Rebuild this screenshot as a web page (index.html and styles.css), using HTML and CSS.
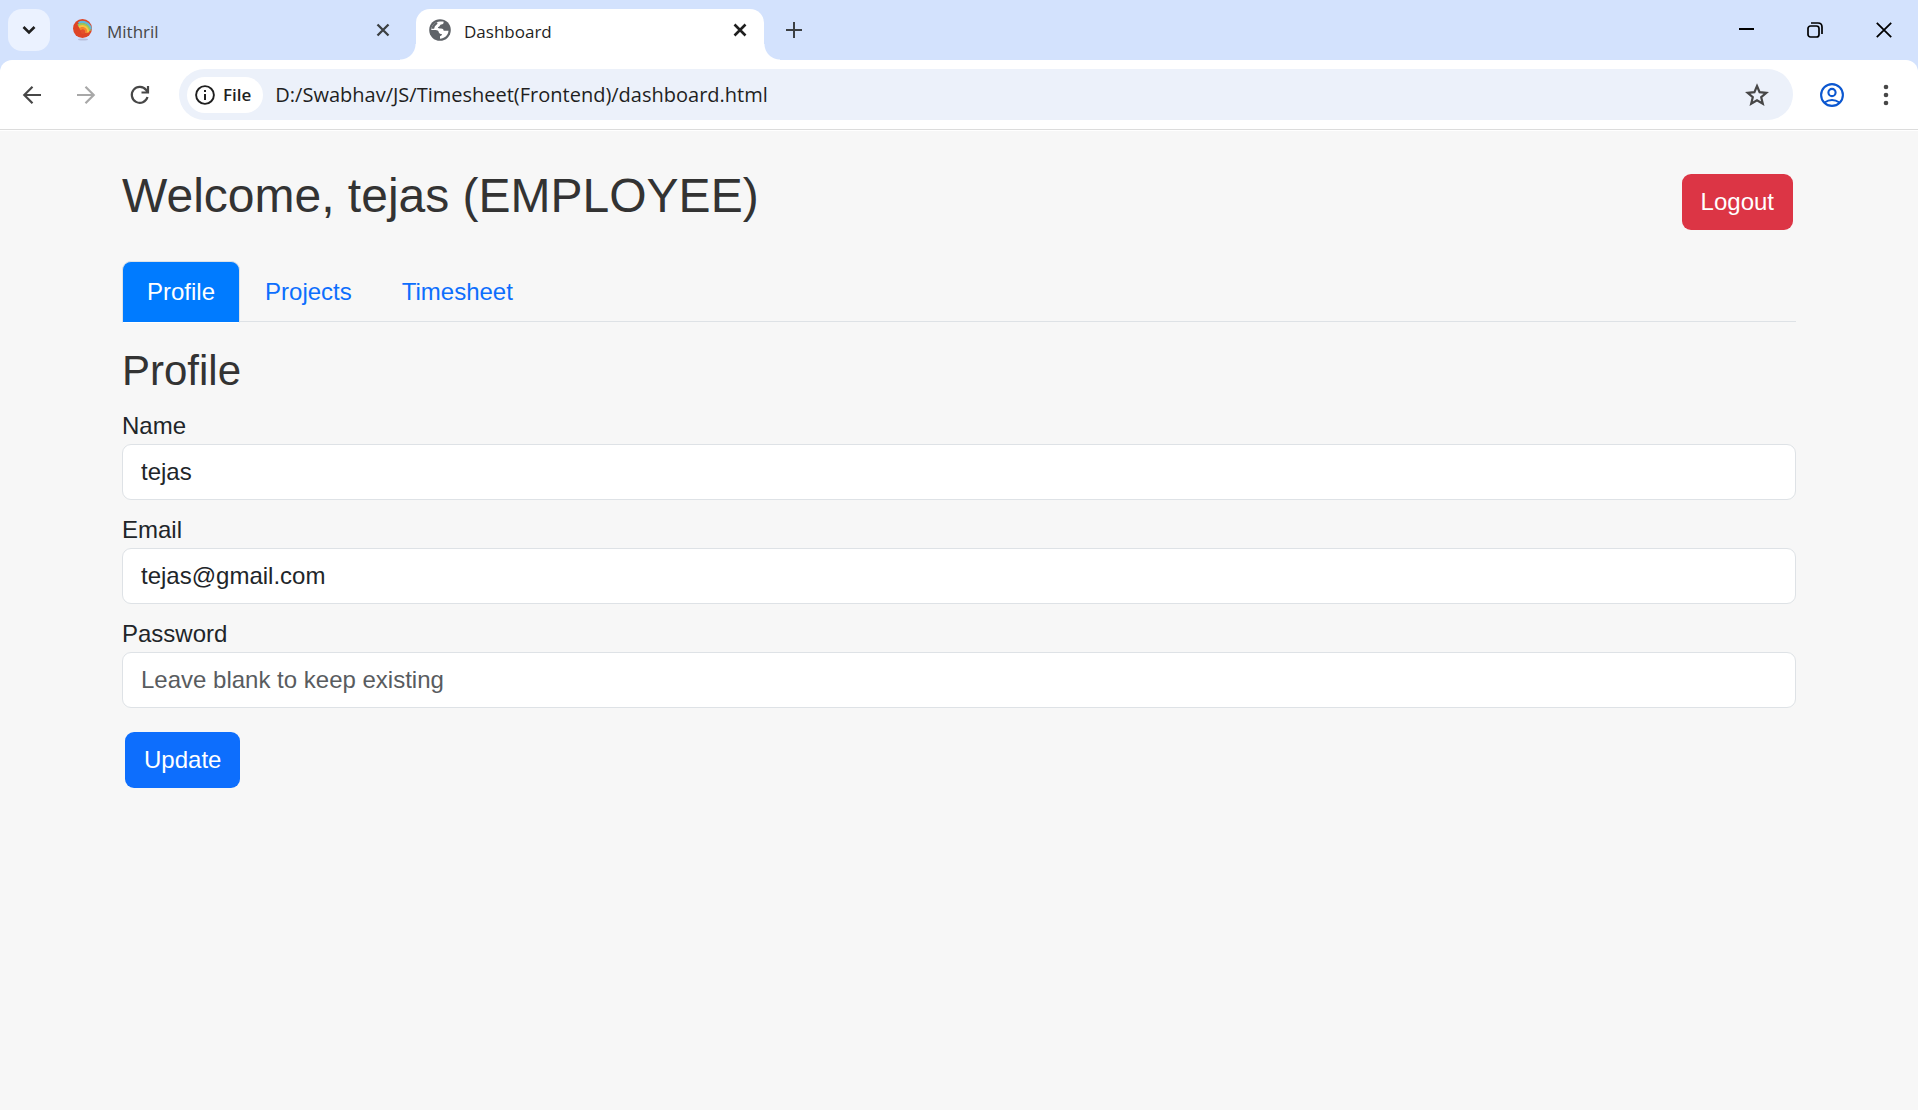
FILE: index.html
```html
<!DOCTYPE html>
<html lang="en">
<head>
<meta charset="utf-8">
<meta name="viewport" content="width=device-width, initial-scale=1">
<title>Dashboard</title>
<link rel="stylesheet" href="styles.css">
</head>
<body>
<header class="browser">
  <div class="tab-strip">
    <button class="tab-search" type="button" aria-label="Search tabs">
      <svg width="14" height="10" viewBox="0 0 14 10" fill="none" stroke="#1f1f1f" stroke-width="2.6"><path d="M1.5 2 7 7.500 12.500 2"/></svg>
    </button>
    <div class="tab">
      <svg class="favicon" width="22" height="22" viewBox="0 0 22 22">
        <ellipse cx="11" cy="20.500" rx="5" ry="1" fill="#b9bfdc"/>
        <circle cx="10.500" cy="9.500" r="9.500" fill="#de4526"/>
        <g fill="none" stroke-width="2.400">
          <path d="M6.500 4.200C11 1.500 18 4 18.700 10.500" stroke="#62b7d9"/>
          <path d="M6 6.500c4.500-3 10.500-.5 11.700 5.500" stroke="#9cc95a"/>
          <path d="M7 8.200c4-2.500 8.500-.5 9.200 5.300" stroke="#f9c440"/>
          <path d="M8 10.500c3-2.500 6.500-.5 6 3.500" stroke="#f3862f"/>
        </g>
        <circle cx="11" cy="12.800" r="2.200" fill="#e4502a"/>
      </svg>
      <span class="tab-title">Mithril</span>
      <button class="tab-close" type="button" aria-label="Close Mithril">
        <svg width="14" height="14" viewBox="0 0 14 14" fill="none" stroke="#3c4043" stroke-width="2.300"><path d="m1.500 1.500 11 11m0-11-11 11"/></svg>
      </button>
    </div>
    <div class="tab tab-active">
      <svg class="favicon" width="22" height="22" viewBox="0 0 22 22">
        <circle cx="11" cy="11" r="10.800" fill="#5f6368"/>
        <path d="M11 2.400h3.500c.5 1.800-.6 3-2.300 3.100-1.200.1-1.200 1.800-2.300 2.200-.8.300-1.200.8-.8 1.400.5.500 1.400.4 2.900.4 1.800 0 2.500.9 2.700 2.300h4.800c-.4 4.500-4 7.900-8.500 7.900v-2.500c1.300-.3 1.900-.9 1.900-2.100-1.800 0-3-.5-3.300-2.300-.2-1.200-1.200-1.900-3.100-1.900H2.300C2.300 6.200 6.200 2.400 11 2.400z" fill="#fff"/>
        <path d="M2.300 9.800C3 6.500 5 4.200 8 3l.5 1.700-2.600 2.500-.8 2.600z" fill="#5f6368"/>
      </svg>
      <span class="tab-title">Dashboard</span>
      <button class="tab-close" type="button" aria-label="Close Dashboard">
        <svg width="14" height="14" viewBox="0 0 14 14" fill="none" stroke="#1f1f1f" stroke-width="2.600"><path d="m1.500 1.500 11 11m0-11-11 11"/></svg>
      </button>
    </div>
    <button class="new-tab" type="button" aria-label="New tab">
      <svg width="16" height="16" viewBox="0 0 16 16" fill="none" stroke="#3c4043" stroke-width="2"><path d="M8 0v16M0 8h16"/></svg>
    </button>
    <div class="window-controls">
      <button type="button" aria-label="Minimize"><svg width="16" height="16" viewBox="0 0 16 16" fill="none" stroke="#000" stroke-width="2"><path d="M1 7h15"/></svg></button>
      <button type="button" aria-label="Restore"><svg width="16" height="16" viewBox="0 0 16 16" fill="none" stroke="#000" stroke-width="1.700"><rect x="1" y="4" width="11" height="11" rx="2.500"/><path d="M4 1h7q4 0 4 4v7"/></svg></button>
      <button type="button" aria-label="Close"><svg width="16" height="16" viewBox="0 0 16 16" fill="none" stroke="#000" stroke-width="1.800"><path d="m.8.8 14.400 14.400m0-14.400L.8 15.200"/></svg></button>
    </div>
  </div>
  <div class="toolbar">
    <button class="tool" type="button" aria-label="Back"><svg width="20" height="20" viewBox="0 0 20 20" fill="none" stroke="#474747" stroke-width="2.200"><path d="M19 10H2.500M10.500 1.800 2.300 10l8.200 8.200"/></svg></button>
    <button class="tool" type="button" aria-label="Forward"><svg width="20" height="20" viewBox="0 0 20 20" fill="none" stroke="#a8a8a8" stroke-width="2.200"><path d="M1 10h16.500M9.500 1.800l8.200 8.200-8.200 8.200"/></svg></button>
    <button class="tool" type="button" aria-label="Reload"><svg width="20" height="20" viewBox="0 0 20 20" fill="none" stroke="#474747" stroke-width="2.200"><path d="M17.500 12A8 8 0 1 1 16.200 5L18 7.200M18 1v6.500h-6.500"/></svg></button>
    <div class="omnibox">
      <button class="site-chip" type="button">
        <svg width="20" height="20" viewBox="0 0 20 20"><circle cx="10" cy="10" r="8.900" fill="none" stroke="#1f1f1f" stroke-width="1.900"/><path d="M9 9h2v6H9zM9 5h2v2H9z" fill="#1f1f1f"/></svg>
        File
      </button>
      <input class="address" type="text" aria-label="Address" value="D:/Swabhav/JS/Timesheet(Frontend)/dashboard.html">
      <button class="bookmark" type="button" aria-label="Bookmark this page"><svg width="24" height="24" viewBox="0 0 24 24" fill="none" stroke="#474747" stroke-width="2.200"><path d="m12 3 2.600 6.200 6.700.6-5.100 4.400 1.600 6.600-5.800-3.500-5.800 3.500 1.600-6.600-5.100-4.400 6.700-.6z"/></svg></button>
    </div>
    <button class="tool" type="button" aria-label="Profile menu"><svg width="24" height="24" viewBox="0 0 24 24" fill="none" stroke="#0b57d0" stroke-width="2.100"><circle cx="12" cy="12" r="10.900"/><circle cx="12" cy="9.500" r="3.600"/><path d="M4.500 19.500q7.500-5 15 0"/></svg></button>
    <button class="tool" type="button" aria-label="Browser menu"><svg width="6" height="22" viewBox="0 0 6 22" fill="#474747"><circle cx="3" cy="3" r="2.300"/><circle cx="3" cy="11" r="2.300"/><circle cx="3" cy="19" r="2.300"/></svg></button>
  </div>
</header>

<main class="page">
  <div class="container">
    <div class="page-header">
      <h1>Welcome, tejas (EMPLOYEE)</h1>
      <button class="btn btn-danger" type="button">Logout</button>
    </div>
    <nav class="nav-tabs">
      <a class="nav-link active" href="#profile" aria-current="page">Profile</a>
      <a class="nav-link" href="#projects">Projects</a>
      <a class="nav-link" href="#timesheet">Timesheet</a>
    </nav>
    <section id="profile">
      <h2>Profile</h2>
      <form class="profile-form">
        <div class="field">
          <label for="name">Name</label>
          <input id="name" type="text" value="tejas">
        </div>
        <div class="field">
          <label for="email">Email</label>
          <input id="email" type="email" value="tejas@gmail.com">
        </div>
        <div class="field">
          <label for="password">Password</label>
          <input id="password" type="password" placeholder="Leave blank to keep existing">
        </div>
        <button class="btn btn-primary" type="button">Update</button>
      </form>
    </section>
  </div>
</main>
</body>
</html>
```
FILE: styles.css
```css
*, *::before, *::after {
  box-sizing: border-box;
}

body {
  margin: 0;
  min-height: 100vh;
  background: #f7f7f7;
  color: #212529;
  font-family: "Liberation Sans", Arial, sans-serif;
  font-size: 24px;
  line-height: 36px;
}

button, input {
  font: inherit;
  color: inherit;
}

button {
  padding: 0;
  border: 0;
  background: none;
}

svg {
  display: block;
  flex: none;
}

/* Browser frame */
.browser {
  background: #d3e2fd;
  color: #1f1f1f;
  font-family: "Open Sans", "Noto Sans", sans-serif;
}

.tab-strip {
  display: flex;
  gap: 9px;
  height: 60px;
  padding: 9px 0 0 8px;
}

.tab-search,
.new-tab {
  display: grid;
  place-items: center;
  width: 42px;
  height: 42px;
}

.tab-search {
  border-radius: 14px;
  background: #ebf2ff;
}

.tab {
  position: relative;
  display: flex;
  align-items: center;
  width: 348px;
  padding: 0 13px 9px;
  color: #474747;
  font-size: 17px;
  line-height: 24px;
}

.tab-active {
  border-radius: 14px 14px 0 0;
  background: #fff;
  color: #1f1f1f;
}

.tab-active::before,
.tab-active::after {
  content: "";
  position: absolute;
  bottom: 0;
  width: 16px;
  height: 16px;
}

.tab-active::before {
  right: 100%;
  background: radial-gradient(circle at 0 0, transparent 15px, #fff 16px);
}

.tab-active::after {
  left: 100%;
  background: radial-gradient(circle at 100% 0, transparent 15px, #fff 16px);
}

.tab-title {
  flex: 1;
  padding: 3px 0 0 13px;
}

.tab-close {
  display: grid;
  place-items: center;
  width: 22px;
  height: 22px;
}

.window-controls {
  display: flex;
  height: 42px;
  margin-left: auto;
}

.window-controls button {
  display: grid;
  place-items: center;
  width: 69px;
}

.toolbar {
  display: flex;
  align-items: center;
  gap: 14px;
  height: 70px;
  padding: 0 12px;
  border-bottom: 1px solid #dcdcdc;
  border-radius: 12px 12px 0 0;
  background: #fff;
}

.tool {
  display: grid;
  place-items: center;
  width: 40px;
  height: 40px;
}

.omnibox {
  display: flex;
  flex: 1;
  align-items: center;
  height: 51px;
  margin: 0 5px;
  padding: 0 24px 0 8px;
  border-radius: 26px;
  background: #ecf1fa;
}

.site-chip {
  display: flex;
  align-items: center;
  gap: 8px;
  height: 36px;
  padding: 0 12px 0 8px;
  border-radius: 18px;
  background: #fff;
  font-size: 17px;
  font-weight: 600;
}

.address {
  flex: 1;
  min-width: 0;
  height: 36px;
  padding: 0 12px;
  border: 0;
  outline: 0;
  background: none;
  font-size: 20px;
}

/* Page */
.page {
  padding-top: 36px;
  border-top: 1px solid #fff;
}

.container {
  max-width: 1710px;
  margin: 0 auto;
  padding: 0 18px;
}

.page-header {
  display: flex;
  align-items: center;
  justify-content: space-between;
  margin-bottom: 24px;
}

h1, h2 {
  margin: 0 0 12px;
  color: #333;
  font-weight: 400;
}

h1 {
  font-size: 48px;
  line-height: 58px;
}

h2 {
  font-size: 42px;
  line-height: 50px;
}

.btn {
  height: 56px;
  margin: 3px;
  padding: 0 19px;
  border-radius: 9px;
  color: #fff;
}

.btn-danger {
  background: #dc3545;
}

.btn-primary {
  background: #0d6efd;
}

.nav-tabs {
  display: flex;
  margin-bottom: 24px;
  border-bottom: 1px solid #dee2e6;
}

.nav-link {
  margin-bottom: -2px;
  padding: 12px 24px;
  border: 1px solid transparent;
  border-radius: 9px 9px 0 0;
  color: #0d6efd;
  text-decoration: none;
}

.nav-link.active {
  border-color: #dee2e6 #dee2e6 #fff;
  background: #007bff;
  color: #fff;
}

.field {
  display: flex;
  flex-direction: column;
  margin-bottom: 12px;
}

.field input {
  height: 56px;
  padding: 0 18px;
  border: 1px solid #dee2e6;
  border-radius: 9px;
  background: #fff;
}

.field input::placeholder {
  color: #595c5f;
  opacity: 1;
}

.profile-form .btn {
  margin-top: 12px;
}
```
